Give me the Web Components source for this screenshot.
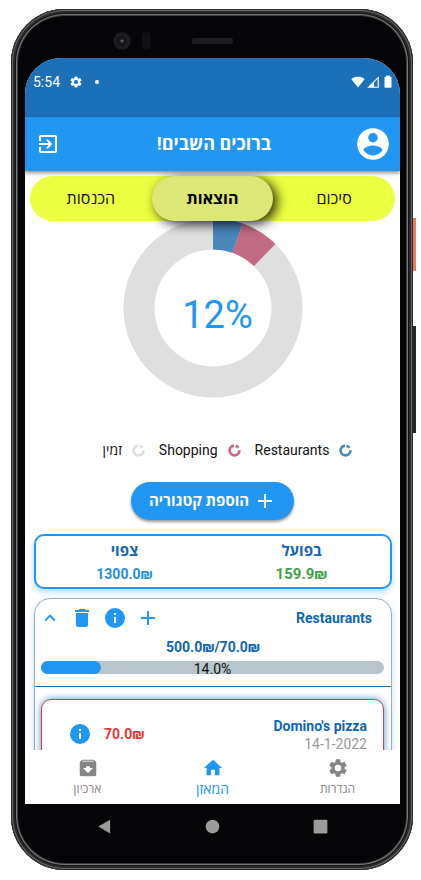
<!DOCTYPE html>
<html lang="he" dir="rtl">
<head>
<meta charset="utf-8">
<meta name="viewport" content="width=device-width, initial-scale=1">
<title>המאזן</title>
<style>
  body {
    margin: 0;
    background: #fff;
    font-family: Roboto, "Open Sans", "Noto Sans", sans-serif;
    font-size: 15px;
    line-height: 20px;
    color: #111;
    --blue: #2196f3;
    --deep: #0d66b5;
    --status: #1b70b7;
  }
</style>
</head>
<body>
<phone-frame>
  <status-bar time="5:54"></status-bar>
  <app-bar>ברוכים השבים!</app-bar>
  <app-content>
    <segment-tabs labels="סיכום,הוצאות,הכנסות" selected="1"></segment-tabs>
    <donut-chart label="12%" parts="5.4:#4a87bb,6.9:#c26a84"></donut-chart>
    <chart-legend>
      <legend-item color="#4a87bb">Restaurants</legend-item>
      <legend-item color="#c26a84">Shopping</legend-item>
      <legend-item color="#dfdfdf">זמין</legend-item>
    </chart-legend>
    <add-button>הוספת קטגוריה</add-button>
    <budget-summary>
      <budget-figure heading="בפועל" amount="159.9₪" tone="good"></budget-figure>
      <budget-figure heading="צפוי" amount="1300.0₪"></budget-figure>
    </budget-summary>
    <category-card name="Restaurants" totals="500.0₪/70.0₪" percent="14.0">
      <transaction-card name="Domino's pizza" date="14-1-2022" amount="70.0₪"></transaction-card>
    </category-card>
  </app-content>
  <bottom-nav>
    <nav-item icon="settings">הגדרות</nav-item>
    <nav-item icon="home" active>המאזן</nav-item>
    <nav-item icon="archive">ארכיון</nav-item>
  </bottom-nav>
  <system-nav slot="system"></system-nav>
</phone-frame>

<script>
const ICONS = {
  settings: '<path d="M19.14 12.94c.04-.3.06-.61.06-.94s-.02-.64-.07-.94l2.03-1.58a.49.49 0 0 0 .12-.61l-1.92-3.32a.49.49 0 0 0-.59-.22l-2.39.96a7 7 0 0 0-1.62-.94l-.36-2.54A.48.48 0 0 0 13.92 2.4h-3.84a.48.48 0 0 0-.47.41l-.36 2.54a7.3 7.3 0 0 0-1.62.94l-2.39-.96a.48.48 0 0 0-.59.22L2.74 8.87a.48.48 0 0 0 .12.61l2.03 1.58a7 7 0 0 0 0 1.88l-2.03 1.58a.49.49 0 0 0-.12.61l1.92 3.32c.12.22.37.29.59.22l2.39-.96c.5.38 1.03.7 1.62.94l.36 2.54c.05.24.24.41.48.41h3.84c.24 0 .44-.17.47-.41l.36-2.54a7 7 0 0 0 1.62-.94l2.39.96c.22.08.47 0 .59-.22l1.92-3.32a.48.48 0 0 0-.12-.61zM12 15.6a3.6 3.6 0 1 1 0-7.2 3.6 3.6 0 0 1 0 7.2z"/>',
  exit: '<path d="M10.09 15.59 11.5 17l5-5-5-5-1.41 1.41L12.67 11H3v2h9.67zM19 3H5a2 2 0 0 0-2 2v4h2V5h14v14H5v-4H3v4a2 2 0 0 0 2 2h14a2 2 0 0 0 2-2V5a2 2 0 0 0-2-2z"/>',
  account: '<path d="M12 2a10 10 0 1 0 0 20 10 10 0 0 0 0-20zm0 3a3 3 0 1 1 0 6 3 3 0 0 1 0-6zm0 14.2a7.2 7.2 0 0 1-6-3.22c.03-1.99 4-3.08 6-3.08s5.97 1.09 6 3.08a7.2 7.2 0 0 1-6 3.22z"/>',
  plus: '<path d="M19 13h-6v6h-2v-6H5v-2h6V5h2v6h6z"/>',
  info: '<path d="M12 2a10 10 0 1 0 0 20 10 10 0 0 0 0-20zm1 15h-2v-6h2zm0-8h-2V7h2z"/>',
  trash: '<path d="M6 19a2 2 0 0 0 2 2h8a2 2 0 0 0 2-2V7H6zM19 4h-3.5l-1-1h-5l-1 1H5v2h14z"/>',
  chevron: '<path d="m12 8-6 6 1.41 1.41L12 10.83l4.59 4.58L18 14z"/>',
  home: '<path d="M10 20v-6h4v6h5v-8h3L12 3 2 12h3v8z"/>',
  archive: '<path d="m20.54 5.23-1.39-1.68A1.45 1.45 0 0 0 18 3H6c-.47 0-.88.21-1.16.55L3.46 5.23C3.17 5.57 3 6.02 3 6.5V19a2 2 0 0 0 2 2h14a2 2 0 0 0 2-2V6.5c0-.48-.17-.93-.46-1.27zM12 17.5 6.5 12H10v-2h4v2h3.5zM5.12 5l.81-1h12l.94 1z"/>',
  wifi: '<path d="M12 21.5 23.6 7C23.2 6.7 18.7 3 12 3S.8 6.7.4 7z"/>',
  signal: '<path fill-rule="evenodd" d="M2 22h20V2zM14 12.5l6-6V20h-6z"/>',
  battery: '<path d="M16.7 3H15V1H9v2H7.3C6.6 3 6 3.6 6 4.3v16.4c0 .7.6 1.3 1.3 1.3h9.4c.7 0 1.3-.6 1.3-1.3V4.3c0-.7-.6-1.3-1.3-1.3z"/>',
  ring: '<g fill="none" stroke="currentColor" stroke-width="5"><path d="M14 3.2A9 9 0 0 1 19.3 6.8"/><path d="M21 11.5A9 9 0 1 1 11 3.06"/></g>',
  back: '<path d="M2 12 21 1v22z"/>',
  circle: '<circle cx="12" cy="12" r="11"/>',
  square: '<rect x="1" y="1" width="22" height="22" rx="2"/>'
};

const define = (tag, render) => customElements.define(tag, class extends HTMLElement {
  connectedCallback() {
    if (this.shadowRoot) return;
    const t = document.createElement('template');
    t.innerHTML = '<style>:host{display:block;box-sizing:border-box}*{box-sizing:border-box}' +
      'button{font:inherit;color:inherit;background:none;border:0;margin:0;padding:0;cursor:pointer}</style>' +
      render(n => this.getAttribute(n) ?? '', this);
    this.attachShadow({ mode: 'open' }).append(t.content.cloneNode(true));
  }
});

define('ui-icon', a => `
  <style>
    :host { display: block; flex: none; width: ${a('size')}px; height: ${a('size')}px; }
    svg { display: block; width: 100%; height: 100%; fill: currentColor; }
  </style>
  <svg viewBox="0 0 24 24" aria-hidden="true">${ICONS[a('name')]}</svg>`);

define('phone-frame', () => `
  <style>
    :host { height: 100vh; padding: 9px 8px 10px 11px; direction: ltr; }
    .shell {
      position: relative; height: 100%; display: flex; flex-direction: column;
      padding: 0 13px 0 14px; border-radius: 54px; background: #050507;
      box-shadow: inset 0 0 0 1px #2a2a2b, inset 0 0 0 2px #666768, inset 0 0 0 4px #2b2b2d,
        inset 0 0 0 5px #121213, inset 0 0 0 6px #77787a, inset 0 0 0 7px #3a3a3c;
    }
    .bezel {
      flex: none; height: 49px; padding-top: 14px;
      display: grid; grid-template-columns: 1fr auto 1fr; align-items: center;
    }
    .sensors { display: flex; align-items: center; justify-content: flex-end; gap: 11px; padding-right: 41px; }
    .camera { width: 18px; height: 18px; border-radius: 50%;
      background: radial-gradient(circle, #5a5a68 0 1px, #15151c 2px 5px, #1d1d21 6px 8px, #111114 9px); }
    .sensor { width: 9px; height: 17px; border-radius: 4px; background: #111113; }
    .speaker { width: 41px; height: 6px; border-radius: 2px; background: #1e1e20; }
    .screen {
      flex: 1; min-height: 0; display: flex; flex-direction: column; direction: rtl;
      border-radius: 36px 36px 0 0; overflow: hidden; background: #fff;
    }
    .key { position: absolute; left: 100%; width: 3px; }
    .power { top: 209px; height: 53px; background: #ec7a63; }
    .volume { top: 317px; height: 107px; background: #262628; }
  </style>
  <div class="shell">
    <div class="bezel">
      <div class="sensors"><div class="camera"></div><div class="sensor"></div></div>
      <div class="speaker"></div>
    </div>
    <div class="screen"><slot></slot></div>
    <slot name="system"></slot>
    <div class="key power"></div><div class="key volume"></div>
  </div>`);

define('status-bar', a => `
  <style>
    :host { flex: none; height: 59px; padding: 14px 5px 0 8px; background: var(--status); color: #fff; direction: ltr; }
    .row { display: flex; align-items: center; font-size: 14px; }
    ui-icon.gear { margin-left: 9px; }
    .dot { width: 4px; height: 4px; border-radius: 50%; background: #fff; margin-left: 12px; }
    .end { margin-left: auto; display: flex; align-items: center; gap: 1px; }
  </style>
  <div class="row">
    <span>${a('time')}</span><ui-icon class="gear" name="settings" size="14"></ui-icon><span class="dot"></span>
    <div class="end"><ui-icon name="wifi" size="14"></ui-icon><ui-icon name="signal" size="14"></ui-icon><ui-icon name="battery" size="14"></ui-icon></div>
  </div>`);

define('app-bar', () => `
  <style>
    :host { flex: none; position: relative; z-index: 2; height: 54px; padding: 0 8px 0 11px;
      display: grid; grid-template-columns: 1fr auto 1fr; align-items: center;
      background: var(--blue); color: #fff; box-shadow: 0 2px 4px rgba(0,0,0,.45); }
    h1 { margin: 0; font-size: 18px; line-height: 24px; font-weight: 700; }
    .exit { justify-self: end; }
  </style>
  <button aria-label="חשבון"><ui-icon name="account" size="38"></ui-icon></button>
  <h1><slot></slot></h1>
  <button class="exit" aria-label="יציאה"><ui-icon name="exit" size="24"></ui-icon></button>`);

define('app-content', () => `
  <style>
    :host { flex: 1; min-height: 0; overflow: hidden; padding-top: 5px; }
  </style><slot></slot>`);

define('segment-tabs', a => `
  <style>
    :host { position: relative; z-index: 1; margin: 0 5px; }
    div { display: grid; grid-template-columns: repeat(3, 1fr); height: 45px; border-radius: 23px; background: #ecff40; }
    button { border-radius: 23px; font-size: 16px; color: #111; }
    [aria-selected=true] { background: #dce775; font-weight: 700; color: #000; box-shadow: 4px 3px 12px rgba(0,0,0,.85); }
  </style>
  <div role="tablist">${a('labels').split(',').map((l, i) =>
    `<button role="tab" aria-selected="${i == a('selected')}">${l}</button>`).join('')}</div>`);

define('donut-chart', a => {
  let from = 0;
  const arcs = a('parts').split(',').map(p => {
    const [v, c] = p.split(':');
    const s = `<circle cx="90" cy="90" r="74" pathLength="100" stroke="${c}" stroke-dasharray="${v} 100" stroke-dashoffset="${-from}"/>`;
    from += +v;
    return s;
  }).join('');
  return `
  <style>
    :host { margin-top: -3px; display: grid; justify-items: center; align-items: center; }
    svg, span { grid-area: 1 / 1; }
    svg { width: 180px; height: 180px; fill: none; stroke-width: 31; }
    span { font-size: 38px; line-height: 44px; color: var(--blue); padding: 14px 0 0 10px; direction: ltr; }
  </style>
  <svg viewBox="0 0 180 180" aria-hidden="true"><circle cx="90" cy="90" r="74" stroke="#dfdfdf"/><g transform="rotate(-90 90 90)">${arcs}</g></svg>
  <span>${a('label')}</span>`;
});

define('chart-legend', () => `
  <style>
    :host { display: flex; justify-content: center; gap: 14px; margin-top: 42px; padding-left: 30px; font-size: 14px; }
  </style><slot></slot>`);

define('legend-item', a => `
  <style>
    :host { display: flex; align-items: center; gap: 10px; }
    ui-icon { color: ${a('color')}; }
  </style><ui-icon name="ring" size="13"></ui-icon><span><slot></slot></span>`);

define('add-button', () => `
  <style>
    :host { display: flex; justify-content: center; margin-top: 22px; }
    button { display: flex; align-items: center; gap: 4px; height: 38px; padding: 0 17px 0 18px; border-radius: 19px;
      background: var(--blue); color: #fff; font-size: 15px; font-weight: 700; box-shadow: 0 2px 3px rgba(0,0,0,.4); }
  </style><button><ui-icon name="plus" size="24"></ui-icon><span><slot></slot></span></button>`);

define('budget-summary', () => `
  <style>
    :host { display: grid; grid-template-columns: 1fr 1fr; margin: 14px 8px 0 9px; padding: 4px 0 3px;
      border: 2px solid var(--blue); border-radius: 10px; background: #fff; box-shadow: 0 3px 6px rgba(33,150,243,.35); }
  </style><slot></slot>`);

define('budget-figure', a => `
  <style>
    :host { text-align: center; font-weight: 700; }
    div { line-height: 22px; color: var(--deep); }
    .amount { font-size: ${a('tone') ? 15 : 14}px; line-height: 24px; height: 22px; direction: ltr; color: ${a('tone') ? '#43a047' : '#2a8fdc'}; }
  </style><div>${a('heading')}</div><div class="amount">${a('amount')}</div>`);

define('category-card', a => `
  <style>
    :host { margin: 9px 8px 0 9px; border: 1px solid #a3abb3; border-radius: 16px; min-height: 240px;
      box-shadow: 0 3px 6px rgba(33,150,243,.3); background: #fff; }
    header { display: flex; align-items: center; justify-content: space-between; padding: 7px 19px 0 4px; }
    h2 { margin: 0; font-size: 14px; line-height: 24px; font-weight: 700; color: var(--deep); }
    .tools { display: flex; gap: 9px; color: var(--blue); direction: ltr; }
    .totals { margin-top: 7px; text-align: center; font-size: 14px; font-weight: 700; color: var(--deep); direction: ltr; }
    .bar { margin: 4px 7px 0 6px; height: 13px; border-radius: 7px; background: #b7c5cc; direction: ltr; display: grid; }
    .fill, .bar span { grid-area: 1 / 1; height: 13px; }
    .fill { width: 60px; border-radius: 7px; background: var(--blue); }
    .bar span { text-align: center; font-size: 14px; line-height: 16px; }
    .items { margin-top: 12px; border-top: 1px solid #1b70b7; padding: 12px 7px 8px 6px; }
  </style>
  <header>
    <h2>${a('name')}</h2>
    <div class="tools">
      <button aria-label="צמצום"><ui-icon name="chevron" size="22"></ui-icon></button>
      <button aria-label="מחיקה"><ui-icon name="trash" size="24"></ui-icon></button>
      <button aria-label="מידע"><ui-icon name="info" size="24"></ui-icon></button>
      <button aria-label="הוספה"><ui-icon name="plus" size="24"></ui-icon></button>
    </div>
  </header>
  <div class="totals">${a('totals')}</div>
  <div class="bar" role="progressbar" aria-label="${a('name')}" aria-valuenow="${a('percent')}"><div class="fill"></div><span>${a('percent')}%</span></div>
  <div class="items"><slot></slot></div>`);

define('transaction-card', a => `
  <style>
    :host { display: flex; align-items: center; justify-content: space-between; padding: 16px 16px 16px 26px;
      border: 1px solid #d0404a; border-radius: 10px; background: #fff; box-shadow: 0 0 7px rgba(33,120,210,.8); }
    b { display: block; font-size: 14px; color: var(--deep); }
    time { display: block; font-size: 14px; line-height: 16px; color: #9a9a9a; text-align: right; direction: ltr; }
    .end { display: flex; align-items: center; gap: 12px; direction: ltr; color: var(--blue); }
    .amount { font-weight: 700; color: #e53935; font-size: 14px; }
  </style>
  <div><b dir="ltr">${a('name')}</b><time>${a('date')}</time></div>
  <div class="end"><button aria-label="מידע"><ui-icon name="info" size="24"></ui-icon></button><span class="amount">${a('amount')}</span></div>`);

define('bottom-nav', () => `
  <style>
    :host { flex: none; height: 54px; display: grid; grid-template-columns: repeat(3, 1fr); background: #fff; position: relative; }
  </style><slot></slot>`);

define('nav-item', (a, el) => `
  <style>
    :host { color: ${el.hasAttribute('active') ? 'var(--blue)' : '#858585'}; }
    button { width: 100%; display: flex; flex-direction: column; align-items: center; padding-top: 7px;
      font-size: ${el.hasAttribute('active') ? 14 : 12}px; line-height: 20px; }
  </style><button><ui-icon name="${a('icon')}" size="22"></ui-icon><span><slot></slot></span></button>`);

define('system-nav', () => `
  <style>
    :host { flex: none; height: 66px; padding: 15px 0 0; color: #9b9b9b; direction: ltr; }
    div { display: flex; justify-content: center; gap: 93px; }
  </style>
  <div><button aria-label="חזרה"><ui-icon name="back" size="15"></ui-icon></button>
  <button aria-label="בית"><ui-icon name="circle" size="15"></ui-icon></button>
  <button aria-label="אחרונים"><ui-icon name="square" size="15"></ui-icon></button></div>`);
</script>
</body>
</html>
